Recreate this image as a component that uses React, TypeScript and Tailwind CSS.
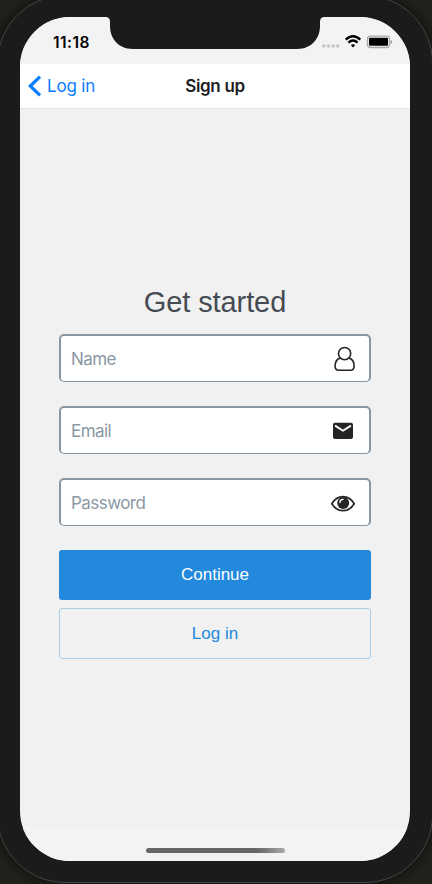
import type { ReactNode } from "react";

function StatusBar() {
  return (
    <div className="relative flex h-[47px] shrink-0 justify-between bg-[#f3f3f3]">
      <span className="ml-[33px] mt-[14px] text-[15.5px] font-semibold leading-[23px] tracking-[0.5px] text-black">
        11:18
      </span>
      <svg className="absolute left-[86px] top-0" width="218" height="33" viewBox="0 0 218 33">
        <path
          d="M0 0C3 .3 4 2 4 5V9C4 21 12 32 27 32H191C206 32 214 21 214 9V5C214 2 215 .3 218 0Z"
          fill="#1b1b1b"
        />
      </svg>
      <svg className="mr-[16px] mt-[16px]" width="74" height="18" viewBox="0 0 74 18">
        <g fill="#c5c5c5">
          <circle cx="3.8" cy="12.9" r="1.75" />
          <circle cx="8.5" cy="12.9" r="1.75" />
          <circle cx="13.1" cy="12.9" r="1.75" />
          <circle cx="17.8" cy="12.9" r="1.75" />
        </g>
        <g fill="none" stroke="#000" strokeWidth="2.3">
          <path d="M25.7 6.6Q33 -.2 40.3 6.6" />
          <path d="M28.4 9.6Q33 5.4 37.6 9.6" />
        </g>
        <path d="M30.8 12.1Q33 10.2 35.2 12.1L33 14.4Z" />
        <rect x="47.5" y="3.1" width="22" height="11.4" rx="3" fill="#f3f3f3" stroke="#a9a9a9" strokeWidth="1.3" />
        <rect x="49" y="4.8" width="19" height="8" rx="1.3" />
        <path d="M70.6 7.1v3.8Q72.2 10.4 72.2 9T70.6 7.1Z" fill="#999" />
      </svg>
    </div>
  );
}

function NavBar() {
  return (
    <div className="grid h-[45px] shrink-0 grid-cols-3 items-center border-b border-[#e6e6e6] bg-white text-[17px]">
      <div className="flex items-center text-[#0a7cff]">
        <svg className="ml-[8px]" width="14" height="22" viewBox="0 0 14 22">
          <path d="M12 1.6L2.3 11L12 20.4" fill="none" stroke="currentColor" strokeWidth="3.2" />
        </svg>
        <span className="ml-[5px] pt-px tracking-[-0.2px]">Log in</span>
      </div>
      <span className="pt-px text-center font-semibold tracking-[-0.3px] text-[#1c1c1e]">Sign up</span>
    </div>
  );
}

function Field({ label, children }: { label: string; children: ReactNode }) {
  return (
    <div className="flex h-12 items-center justify-between rounded-[5px] border-2 border-b border-[#8796a3] bg-white pl-[10px] pr-[12px]">
      <span className="pt-[2px] text-[17px] tracking-[-0.55px] text-[#8a98a4]">{label}</span>
      {children}
    </div>
  );
}

function PersonIcon() {
  return (
    <svg width="26" height="26" viewBox="0 0 26 26" fill="none" stroke="#252525" strokeWidth="1.6">
      <circle cx="13.6" cy="7.6" r="6.1" />
      <path d="M9.2 12.1C5.4 13 4.1 16.6 4.1 20.3C4.1 22.8 5.6 24.2 7.7 24.2H19.5C21.6 24.2 23.1 22.8 23.1 20.3C23.1 16.6 21.8 13 18 12.1" />
    </svg>
  );
}

function MailIcon() {
  return (
    <svg width="26" height="26" viewBox="0 0 26 26">
      <rect x="2" y="4.8" width="20" height="16.2" rx="2" fill="#252525" />
      <path d="M4.1 7.6L12 12.7L19.9 7.6" fill="none" stroke="#fff" strokeWidth="1.9" />
    </svg>
  );
}

function EyeIcon() {
  return (
    <svg width="26" height="26" viewBox="0 0 26 26">
      <path
        d="M.8 13.7C3.6 9.2 7.6 6.7 12 6.7S20.4 9.2 23.2 13.7C20.4 18.2 16.4 20.7 12 20.7S3.6 18.2 .8 13.7Z"
        fill="#fff"
        stroke="#252525"
        strokeWidth="1.7"
      />
      <circle cx="12.2" cy="12.9" r="6" fill="#252525" />
      <path d="M8.9 12.5Q8.9 9.5 12.1 9.4" fill="none" stroke="#fff" strokeWidth="1.3" strokeLinecap="round" />
    </svg>
  );
}

export default function App() {
  return (
    <div className="h-[884px] w-[432px] overflow-hidden bg-[#20221b] font-[Inter,'Liberation_Sans',sans-serif]">
      <div className="-ml-[3px] -mt-[5px] h-[888px] w-[436px] rounded-[68px] border border-[#464646] bg-[#1b1b1b] pl-[22px] pt-[21px] shadow-[0_0_14px_#0c0d0a]">
        <div className="flex h-[844px] w-[390px] flex-col overflow-hidden rounded-[50px] bg-[#f1f1f1]">
          <StatusBar />
          <NavBar />
          <main className="flex flex-1 flex-col px-[39px] pt-[174px]">
            <h1 className="text-center font-['Liberation_Sans',sans-serif] text-[29px] leading-[38px] tracking-[-0.1px] text-[#454b52]">
              Get started
            </h1>
            <div className="mt-[13px] flex flex-col gap-6">
              <Field label="Name">
                <PersonIcon />
              </Field>
              <Field label="Email">
                <MailIcon />
              </Field>
              <Field label="Password">
                <EyeIcon />
              </Field>
            </div>
            <div className="mt-6 flex flex-col gap-2 font-['Liberation_Sans',sans-serif] text-[17px]">
              <button className="h-[50px] rounded-[3px] bg-[#2289dc] text-white">Continue</button>
              <button className="h-[51px] rounded-[3px] border border-[#aacde8] text-[#2289dc]">Log in</button>
            </div>
          </main>
          <footer className="flex h-[34px] shrink-0 justify-center bg-[#f3f3f3] pt-[21px]">
            <div className="h-[5px] w-[139px] rounded-full bg-linear-to-r from-[#666] from-80% to-[#aaa]" />
          </footer>
        </div>
      </div>
    </div>
  );
}
